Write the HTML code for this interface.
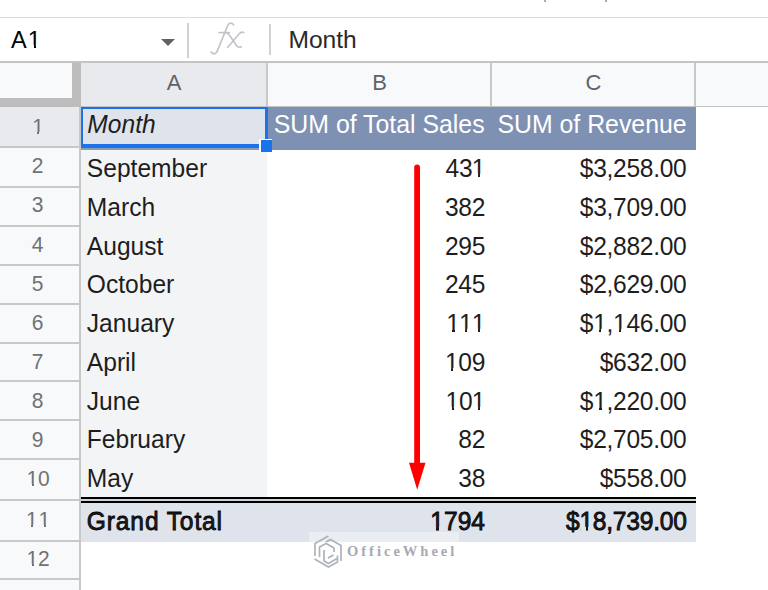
<!DOCTYPE html>
<html><head><meta charset="utf-8">
<style>
*{margin:0;padding:0;box-sizing:border-box}
html,body{width:768px;height:590px;overflow:hidden;background:#fff;position:relative;font-family:"Liberation Sans",sans-serif}
.a{position:absolute}
.t{position:absolute;white-space:nowrap}
.o{position:relative;margin-left:-0.6px}
.o::before,.o::after{content:"";position:absolute;top:calc(0.905em - 0.115em);height:0.145em;background:var(--bg,#fff)}
.o::before{left:0.05em;width:0.2em}
.o::after{left:0.34em;width:0.225em}
</style></head><body>
<div class="a" style="left:544px;top:0px;width:2px;height:2px;background:#a8acb0;"></div>
<div class="a" style="left:605px;top:0px;width:2px;height:2px;background:#a8acb0;"></div>
<div class="a" style="left:0px;top:17px;width:768px;height:1px;background:#dadce0;"></div>
<div class="t" style="left:10.90px;top:28.81px;font-size:23.5px;line-height:23.5px;color:#000;">A<span class="o" style="--bg:#fff;margin-left:1.2px">1</span></div>
<svg class="a" style="left:160px;top:38px" width="16" height="9"><path d="M1 1 L15 1 L8 8 Z" fill="#5f6368"/></svg>
<div class="a" style="left:187px;top:23px;width:1.5px;height:35px;background:#cfd1d4;"></div>
<div class="a" style="left:269px;top:24px;width:1.5px;height:31px;background:#cfd1d4;"></div>
<svg class="a" style="left:205px;top:18px" width="45" height="42" viewBox="0 0 45 42">
<path d="M28.5 6.8 C26.8 4.3 23.6 4.6 22.4 8.2 L12.2 33.2 C10.8 36.4 7.8 36.6 6.2 34" fill="none" stroke="#c0c3c7" stroke-width="1.7" stroke-linecap="round"/>
<path d="M13.4 14.6 L25.2 14.6" fill="none" stroke="#c0c3c7" stroke-width="1.6"/>
<path d="M20.8 14.8 C22.8 15 23.8 16 25 18 L31.5 27.5 C32.8 29.2 34.5 29.6 36.3 28.8" fill="none" stroke="#c0c3c7" stroke-width="1.6" stroke-linecap="round"/>
<path d="M38.8 14.6 C37 13.6 35.4 14.4 34 16 L22.6 29.4" fill="none" stroke="#c0c3c7" stroke-width="1.6" stroke-linecap="round"/>
</svg>
<div class="t" style="left:288.40px;top:27.68px;font-size:24.6px;line-height:24.6px;color:#2a2a2a;">Month</div>
<div class="a" style="left:0px;top:61px;width:768px;height:2px;background:#c4c4c4;"></div>
<div class="a" style="left:0px;top:63px;width:72px;height:35px;background:#f8f9fa;"></div>
<div class="a" style="left:81px;top:63px;width:186px;height:43px;background:#e8eaed;"></div>
<div class="a" style="left:268px;top:63px;width:223px;height:43px;background:#f8f9fa;"></div>
<div class="a" style="left:492px;top:63px;width:203px;height:43px;background:#f8f9fa;"></div>
<div class="a" style="left:696px;top:63px;width:72px;height:43px;background:#f8f9fa;"></div>
<div class="a" style="left:266px;top:63px;width:2px;height:44px;background:#c8c8c8;"></div>
<div class="a" style="left:490px;top:63px;width:2px;height:44px;background:#c8c8c8;"></div>
<div class="a" style="left:694px;top:63px;width:2px;height:44px;background:#c8c8c8;"></div>
<div class="a" style="left:0px;top:106px;width:768px;height:1px;background:#c4c4c4;"></div>
<div class="t" style="left:144.00px;width:60px;text-align:center;top:72.08px;font-size:22px;line-height:22px;color:#5f6368;">A</div>
<div class="t" style="left:349.50px;width:60px;text-align:center;top:72.08px;font-size:22px;line-height:22px;color:#5f6368;">B</div>
<div class="t" style="left:563.50px;width:60px;text-align:center;top:72.08px;font-size:22px;line-height:22px;color:#5f6368;">C</div>
<div class="a" style="left:72px;top:63px;width:9px;height:44px;background:#bdbdbd;"></div>
<div class="a" style="left:0px;top:98px;width:81px;height:9px;background:#bdbdbd;"></div>
<div class="a" style="left:0px;top:107px;width:80px;height:483px;background:#f8f9fa;"></div>
<div class="a" style="left:0px;top:107px;width:80px;height:40px;background:#e8eaed;"></div>
<div class="a" style="left:79px;top:107px;width:2px;height:483px;background:#c8c8c8;"></div>
<div class="a" style="left:0px;top:146px;width:80px;height:2px;background:#c8c8c8;"></div>
<div class="a" style="left:0px;top:186px;width:80px;height:2px;background:#c8c8c8;"></div>
<div class="a" style="left:0px;top:225px;width:80px;height:2px;background:#c8c8c8;"></div>
<div class="a" style="left:0px;top:264px;width:80px;height:2px;background:#c8c8c8;"></div>
<div class="a" style="left:0px;top:303px;width:80px;height:2px;background:#c8c8c8;"></div>
<div class="a" style="left:0px;top:342px;width:80px;height:2px;background:#c8c8c8;"></div>
<div class="a" style="left:0px;top:380px;width:80px;height:2px;background:#c8c8c8;"></div>
<div class="a" style="left:0px;top:419px;width:80px;height:2px;background:#c8c8c8;"></div>
<div class="a" style="left:0px;top:458px;width:80px;height:2px;background:#c8c8c8;"></div>
<div class="a" style="left:0px;top:499px;width:80px;height:2px;background:#c8c8c8;"></div>
<div class="a" style="left:0px;top:540px;width:80px;height:2px;background:#c8c8c8;"></div>
<div class="a" style="left:0px;top:578px;width:80px;height:2px;background:#c8c8c8;"></div>
<div class="t" style="left:7.60px;width:60px;text-align:center;top:115.52px;font-size:21px;line-height:21px;color:#6d7277;;transform:scaleY(1.05);transform-origin:0 17.78px;"><span class="o" style="--bg:#e8eaed;margin-left:1px">1</span></div>
<div class="t" style="left:7.60px;width:60px;text-align:center;top:155.32px;font-size:21px;line-height:21px;color:#6d7277;;transform:scaleY(1.05);transform-origin:0 17.78px;">2</div>
<div class="t" style="left:7.60px;width:60px;text-align:center;top:194.42px;font-size:21px;line-height:21px;color:#6d7277;;transform:scaleY(1.05);transform-origin:0 17.78px;">3</div>
<div class="t" style="left:7.60px;width:60px;text-align:center;top:233.52px;font-size:21px;line-height:21px;color:#6d7277;;transform:scaleY(1.05);transform-origin:0 17.78px;">4</div>
<div class="t" style="left:7.60px;width:60px;text-align:center;top:272.62px;font-size:21px;line-height:21px;color:#6d7277;;transform:scaleY(1.05);transform-origin:0 17.78px;">5</div>
<div class="t" style="left:7.60px;width:60px;text-align:center;top:311.72px;font-size:21px;line-height:21px;color:#6d7277;;transform:scaleY(1.05);transform-origin:0 17.78px;">6</div>
<div class="t" style="left:7.60px;width:60px;text-align:center;top:350.82px;font-size:21px;line-height:21px;color:#6d7277;;transform:scaleY(1.05);transform-origin:0 17.78px;">7</div>
<div class="t" style="left:7.60px;width:60px;text-align:center;top:389.92px;font-size:21px;line-height:21px;color:#6d7277;;transform:scaleY(1.05);transform-origin:0 17.78px;">8</div>
<div class="t" style="left:7.60px;width:60px;text-align:center;top:429.02px;font-size:21px;line-height:21px;color:#6d7277;;transform:scaleY(1.05);transform-origin:0 17.78px;">9</div>
<div class="t" style="left:7.60px;width:60px;text-align:center;top:468.12px;font-size:21px;line-height:21px;color:#6d7277;;transform:scaleY(1.05);transform-origin:0 17.78px;"><span class="o" style="--bg:#f8f9fa;margin-left:1px">1</span>0</div>
<div class="t" style="left:7.60px;width:60px;text-align:center;top:509.02px;font-size:21px;line-height:21px;color:#6d7277;;transform:scaleY(1.05);transform-origin:0 17.78px;"><span class="o" style="--bg:#f8f9fa;margin-left:1px">1</span><span class="o" style="--bg:#f8f9fa;margin-left:1px">1</span></div>
<div class="t" style="left:7.60px;width:60px;text-align:center;top:548.22px;font-size:21px;line-height:21px;color:#6d7277;;transform:scaleY(1.05);transform-origin:0 17.78px;"><span class="o" style="--bg:#f8f9fa;margin-left:1px">1</span>2</div>
<div class="a" style="left:81px;top:148px;width:186px;height:349px;background:#f3f4f6;"></div>
<div class="a" style="left:81px;top:107px;width:187px;height:42px;background:#dfe3eb;"></div>
<div class="a" style="left:81px;top:148px;width:186px;height:2px;background:#8d9bb5;"></div>
<div class="a" style="left:268px;top:107px;width:428px;height:43px;background:#7f91b3;"></div>
<div class="a" style="left:81px;top:497px;width:615px;height:6px;background:#cfd3da;"></div>
<div class="a" style="left:81px;top:497px;width:615px;height:2px;background:#000;"></div>
<div class="a" style="left:81px;top:501px;width:615px;height:2px;background:#000;"></div>
<div class="a" style="left:81px;top:503px;width:615px;height:38.5px;background:#dfe3eb;"></div>
<div class="a" style="left:81px;top:107px;width:187px;height:41px;border:2.5px solid #1a73e8;border-bottom-width:4px;border-right-width:3px"></div>
<div class="a" style="left:259px;top:139px;width:13px;height:13px;background:#fff;"></div>
<div class="a" style="left:261px;top:140px;width:11px;height:12px;background:#1a73e8;"></div>
<div class="t" style="left:87.30px;top:113.18px;font-size:24.6px;line-height:24.6px;color:#1e1e1e;font-style:italic;transform:scaleY(1.05);transform-origin:0 20.82px;">Month</div>
<div class="t" style="left:184.60px;width:300px;text-align:right;top:112.96px;font-size:24.85px;line-height:24.85px;color:#fff;;transform:scaleY(1.05);transform-origin:0 21.04px;">SUM of Total Sales</div>
<div class="t" style="left:386.60px;width:300px;text-align:right;top:112.96px;font-size:24.85px;line-height:24.85px;color:#fff;;transform:scaleY(1.05);transform-origin:0 21.04px;">SUM of Revenue</div>
<div class="t" style="left:86.80px;top:157.08px;font-size:24.6px;line-height:24.6px;color:#1e1e1e;;transform:scaleY(1.05);transform-origin:0 20.82px;">September</div>
<div class="t" style="left:185.00px;width:300px;text-align:right;top:157.08px;font-size:24.6px;line-height:24.6px;color:#1e1e1e;letter-spacing:-0.35px;;transform:scaleY(1.05);transform-origin:0 20.82px;">43<span class="o" style="--bg:#fff">1</span></div>
<div class="t" style="left:386.50px;width:300px;text-align:right;top:157.08px;font-size:24.6px;line-height:24.6px;color:#1e1e1e;letter-spacing:-0.3px;;transform:scaleY(1.05);transform-origin:0 20.82px;">$3,258.00</div>
<div class="t" style="left:86.80px;top:195.83px;font-size:24.6px;line-height:24.6px;color:#1e1e1e;;transform:scaleY(1.05);transform-origin:0 20.82px;">March</div>
<div class="t" style="left:185.00px;width:300px;text-align:right;top:195.83px;font-size:24.6px;line-height:24.6px;color:#1e1e1e;letter-spacing:-0.35px;;transform:scaleY(1.05);transform-origin:0 20.82px;">382</div>
<div class="t" style="left:386.50px;width:300px;text-align:right;top:195.83px;font-size:24.6px;line-height:24.6px;color:#1e1e1e;letter-spacing:-0.3px;;transform:scaleY(1.05);transform-origin:0 20.82px;">$3,709.00</div>
<div class="t" style="left:86.80px;top:234.58px;font-size:24.6px;line-height:24.6px;color:#1e1e1e;;transform:scaleY(1.05);transform-origin:0 20.82px;">August</div>
<div class="t" style="left:185.00px;width:300px;text-align:right;top:234.58px;font-size:24.6px;line-height:24.6px;color:#1e1e1e;letter-spacing:-0.35px;;transform:scaleY(1.05);transform-origin:0 20.82px;">295</div>
<div class="t" style="left:386.50px;width:300px;text-align:right;top:234.58px;font-size:24.6px;line-height:24.6px;color:#1e1e1e;letter-spacing:-0.3px;;transform:scaleY(1.05);transform-origin:0 20.82px;">$2,882.00</div>
<div class="t" style="left:86.80px;top:273.33px;font-size:24.6px;line-height:24.6px;color:#1e1e1e;;transform:scaleY(1.05);transform-origin:0 20.82px;">October</div>
<div class="t" style="left:185.00px;width:300px;text-align:right;top:273.33px;font-size:24.6px;line-height:24.6px;color:#1e1e1e;letter-spacing:-0.35px;;transform:scaleY(1.05);transform-origin:0 20.82px;">245</div>
<div class="t" style="left:386.50px;width:300px;text-align:right;top:273.33px;font-size:24.6px;line-height:24.6px;color:#1e1e1e;letter-spacing:-0.3px;;transform:scaleY(1.05);transform-origin:0 20.82px;">$2,629.00</div>
<div class="t" style="left:86.80px;top:312.08px;font-size:24.6px;line-height:24.6px;color:#1e1e1e;;transform:scaleY(1.05);transform-origin:0 20.82px;">January</div>
<div class="t" style="left:185.00px;width:300px;text-align:right;top:312.08px;font-size:24.6px;line-height:24.6px;color:#1e1e1e;letter-spacing:-0.35px;;transform:scaleY(1.05);transform-origin:0 20.82px;"><span class="o" style="--bg:#fff">1</span><span class="o" style="--bg:#fff">1</span><span class="o" style="--bg:#fff">1</span></div>
<div class="t" style="left:386.50px;width:300px;text-align:right;top:312.08px;font-size:24.6px;line-height:24.6px;color:#1e1e1e;letter-spacing:-0.3px;;transform:scaleY(1.05);transform-origin:0 20.82px;">$<span class="o" style="--bg:#fff;margin-left:0px">1</span>,<span class="o" style="--bg:#fff;margin-left:0px">1</span>46.00</div>
<div class="t" style="left:86.80px;top:350.83px;font-size:24.6px;line-height:24.6px;color:#1e1e1e;;transform:scaleY(1.05);transform-origin:0 20.82px;">April</div>
<div class="t" style="left:185.00px;width:300px;text-align:right;top:350.83px;font-size:24.6px;line-height:24.6px;color:#1e1e1e;letter-spacing:-0.35px;;transform:scaleY(1.05);transform-origin:0 20.82px;"><span class="o" style="--bg:#fff">1</span>09</div>
<div class="t" style="left:386.50px;width:300px;text-align:right;top:350.83px;font-size:24.6px;line-height:24.6px;color:#1e1e1e;letter-spacing:-0.3px;;transform:scaleY(1.05);transform-origin:0 20.82px;">$632.00</div>
<div class="t" style="left:86.80px;top:389.58px;font-size:24.6px;line-height:24.6px;color:#1e1e1e;;transform:scaleY(1.05);transform-origin:0 20.82px;">June</div>
<div class="t" style="left:185.00px;width:300px;text-align:right;top:389.58px;font-size:24.6px;line-height:24.6px;color:#1e1e1e;letter-spacing:-0.35px;;transform:scaleY(1.05);transform-origin:0 20.82px;"><span class="o" style="--bg:#fff">1</span>0<span class="o" style="--bg:#fff">1</span></div>
<div class="t" style="left:386.50px;width:300px;text-align:right;top:389.58px;font-size:24.6px;line-height:24.6px;color:#1e1e1e;letter-spacing:-0.3px;;transform:scaleY(1.05);transform-origin:0 20.82px;">$<span class="o" style="--bg:#fff;margin-left:0px">1</span>,220.00</div>
<div class="t" style="left:86.80px;top:428.33px;font-size:24.6px;line-height:24.6px;color:#1e1e1e;;transform:scaleY(1.05);transform-origin:0 20.82px;">February</div>
<div class="t" style="left:185.00px;width:300px;text-align:right;top:428.33px;font-size:24.6px;line-height:24.6px;color:#1e1e1e;letter-spacing:-0.35px;;transform:scaleY(1.05);transform-origin:0 20.82px;">82</div>
<div class="t" style="left:386.50px;width:300px;text-align:right;top:428.33px;font-size:24.6px;line-height:24.6px;color:#1e1e1e;letter-spacing:-0.3px;;transform:scaleY(1.05);transform-origin:0 20.82px;">$2,705.00</div>
<div class="t" style="left:86.80px;top:467.08px;font-size:24.6px;line-height:24.6px;color:#1e1e1e;;transform:scaleY(1.05);transform-origin:0 20.82px;">May</div>
<div class="t" style="left:185.00px;width:300px;text-align:right;top:467.08px;font-size:24.6px;line-height:24.6px;color:#1e1e1e;letter-spacing:-0.35px;;transform:scaleY(1.05);transform-origin:0 20.82px;">38</div>
<div class="t" style="left:386.50px;width:300px;text-align:right;top:467.08px;font-size:24.6px;line-height:24.6px;color:#1e1e1e;letter-spacing:-0.3px;;transform:scaleY(1.05);transform-origin:0 20.82px;">$558.00</div>
<div class="t" style="left:86.80px;top:509.98px;font-size:24.6px;line-height:24.6px;color:#1e1e1e;-webkit-text-stroke:0.75px #000;letter-spacing:0.86px;transform:scaleY(1.05);transform-origin:0 20.82px;">Grand Total</div>
<div class="t" style="left:185.00px;width:300px;text-align:right;top:509.98px;font-size:24.6px;line-height:24.6px;color:#1e1e1e;-webkit-text-stroke:0.75px #000;transform:scaleY(1.05);transform-origin:0 20.82px;"><span class="o" style="--bg:#dfe3eb">1</span>794</div>
<div class="t" style="left:386.60px;width:300px;text-align:right;top:509.98px;font-size:24.6px;line-height:24.6px;color:#1e1e1e;-webkit-text-stroke:0.75px #000;letter-spacing:-0.25px;transform:scaleY(1.05);transform-origin:0 20.82px;">$<span class="o" style="--bg:#dfe3eb;margin-left:0px">1</span>8,739.00</div>
<svg class="a" style="left:400px;top:155px" width="40" height="345" viewBox="0 0 40 345">
<path d="M17.1 12.5 L17.1 310" stroke="#ff0000" stroke-width="5.8" stroke-linecap="round"/>
<path d="M9 307.7 L25.5 307.7 L17.2 334.8 Z" fill="#ff0000"/></svg>
<div class="a" style="left:309px;top:532px;width:150px;height:32px;background:rgba(255,255,255,0.35);"></div>
<svg class="a" style="left:312px;top:534px" width="34" height="35" viewBox="0 0 34 35">
<g fill="none" stroke="#aeb2b9" stroke-width="1.7">
<path d="M3 22 L3 9.5 L16.5 2"/>
<path d="M14 8 L18.5 5.5 L29 11.5 L29 27"/>
<path d="M2.5 25 L16.5 33 L25.5 28 L25.5 21.5"/>
<path d="M7.5 23 L7.5 13 L14 9.5 L22 14 L22 18"/>
<path d="M12 16 L12 27 L16.5 29.5 L25 24.5"/>
<path d="M16 24 L21.5 21"/>
</g></svg>
<div class="a" style="left:347px;top:541.3px;font-family:'Liberation Serif',serif;font-weight:bold;font-size:14.5px;letter-spacing:3px;color:#a6aab2;line-height:20px;white-space:nowrap">OfficeWheel</div>
</body></html>
